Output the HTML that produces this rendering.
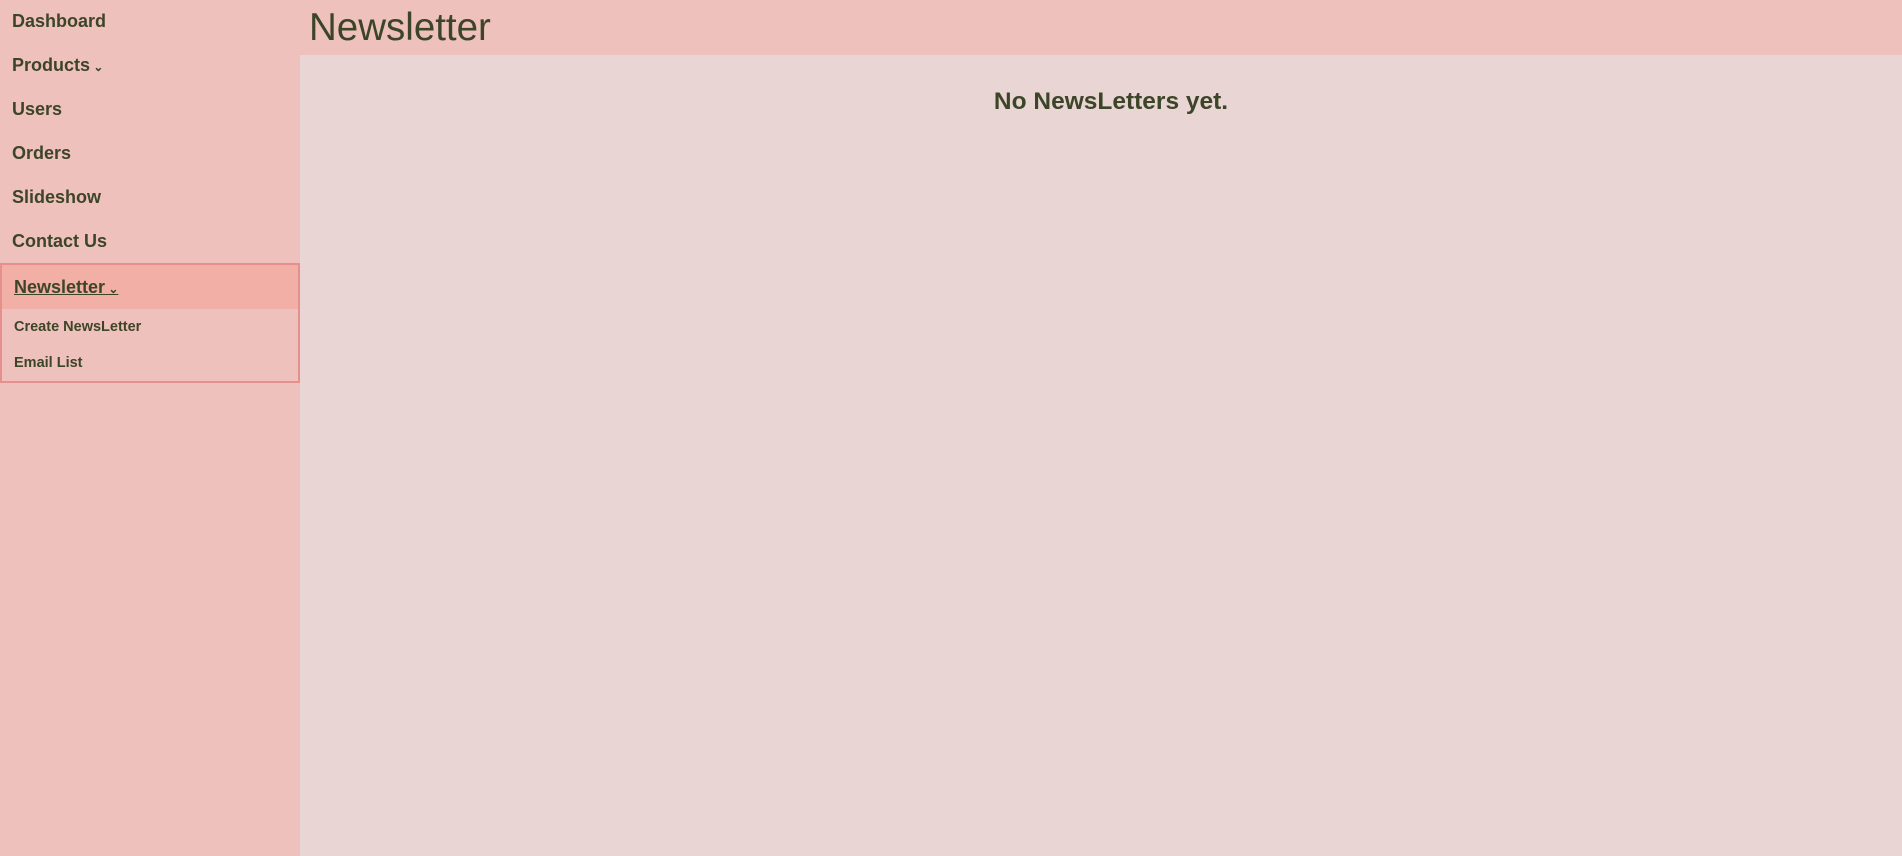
<!DOCTYPE html>
<html><head><style>
body{margin:0;width:1902px;height:856px;background:#e8d5d4;font-family:"Liberation Sans",sans-serif;color:#3d4528;overflow:hidden;position:relative}
.side{position:absolute;left:0;top:0;width:300px;height:856px;background:#efc1bc}
.item{position:absolute;left:12px;font-weight:bold;font-size:18px}
.head{position:absolute;left:300px;top:0;width:1602px;height:55px;background:#efc1bc}
.head h1{margin:0;position:absolute;left:9px;top:6px;font-size:38.5px;font-weight:normal}
.box{position:absolute;left:0;top:263px;width:296px;height:116px;border:2px solid #e5908c}
.hl{position:absolute;left:0;top:0;width:296px;height:44px;background:#f2afa6}
.sub{position:absolute;left:12px;font-weight:bold;font-size:14.5px}
.msg{position:absolute;left:310px;width:1602px;top:88px;text-align:center;font-weight:bold;font-size:24.5px}
.chev{font-size:12px;font-weight:bold}
</style></head><body>
<div class="side">
<div class="item" style="top:11px">Dashboard</div>
<div class="item" style="top:55px">Products<span class="chev"> ⌄</span></div>
<div class="item" style="top:99px">Users</div>
<div class="item" style="top:143px">Orders</div>
<div class="item" style="top:187px">Slideshow</div>
<div class="item" style="top:231px">Contact Us</div>
<div class="box"><div class="hl"></div>
<div class="item" style="top:12px;text-decoration:underline">Newsletter<span class="chev"> ⌄</span></div>
<div class="sub" style="top:54px">Create NewsLetter</div>
<div class="sub" style="top:90px">Email List</div>
</div>
</div>
<div class="head"><h1>Newsletter</h1></div>
<div class="msg">No NewsLetters yet.</div>
</body></html>
